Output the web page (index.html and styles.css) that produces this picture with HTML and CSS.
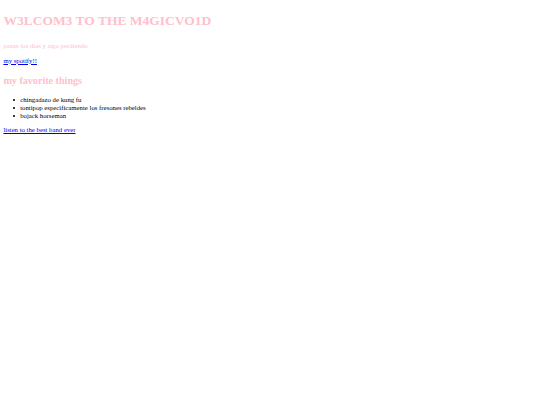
FILE: index.html
```html
<!DOCTYPE html>
<html>
<head>
<meta charset="utf-8">
<title>M4GICVO1D</title>
<link rel="stylesheet" href="styles.css">
</head>
<body class="page">
<h1 class="title">W3LCOM3 TO THE M4GICVO1D</h1>
<p class="subtitle">pasan los dias y sigo perdiendo</p>
<p class="para"><a class="link" href="#">my spotify!!</a></p>
<h2 class="heading">my favorite things</h2>
<ul class="things">
<li class="thing">chingadazo de kung fu</li>
<li class="thing">tontipop especificamente los fresones rebeldes</li>
<li class="thing">bojack horseman</li>
</ul>
<p class="para"><a class="link" href="#">listen to the best band ever</a></p>
</body>
</html>
```

FILE: styles.css
```css
html { background: #fff; }
.page {
  margin: 0;
  padding: 3.375px;
  font-family: "Liberation Serif", "Times New Roman", serif;
  font-size: 6.75px;
  line-height: 7.76px;
  color: #000;
}
.title {
  font-size: 13.5px;
  line-height: 15.52px;
  font-weight: bold;
  color: pink;
  margin: 10px 0 0;
}
.subtitle {
  color: pink;
  margin: 13.3px 0 5.6px;
}
.para { margin: 6.75px 0; }
.link { color: #0000ee; }
.heading {
  font-size: 10.125px;
  line-height: 11.64px;
  font-weight: bold;
  color: pink;
  margin: 10.6px 0 9.4px;
}
.things {
  margin: 9.6px 0 4.2px;
  padding-left: 9.4px;
  list-style: none;
}
.thing {
  display: flex;
  align-items: center;
  gap: 5px;
}
.thing::before {
  content: "";
  width: 2.4px;
  height: 2.4px;
  border-radius: 50%;
  background: #000;
  flex: none;
}
```
